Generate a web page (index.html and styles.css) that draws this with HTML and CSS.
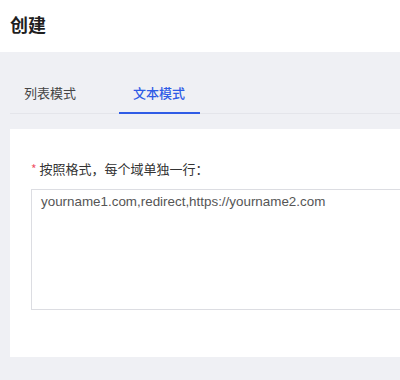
FILE: index.html
```html
<!DOCTYPE html>
<html lang="zh">
<head>
<meta charset="utf-8">
<link rel="stylesheet" href="styles.css">
</head>
<body>
<header class="header"><h1 class="title">创建</h1></header>
<main class="main">
  <nav class="tabs">
    <div class="tab">列表模式</div>
    <div class="tab tab-active">文本模式</div>
  </nav>
  <section class="card">
    <label class="label"><span class="req">*</span>按照格式，每个域单独一行：</label>
    <div class="textarea">yourname1.com,redirect,https://yourname2.com</div>
  </section>
</main>
</body>
</html>
```
FILE: styles.css
```css
html, body {
  margin: 0;
  padding: 0;
  width: 400px;
  height: 380px;
  overflow: hidden;
  background: #eff0f4;
  font-family: "Liberation Sans", "Noto Sans CJK SC", sans-serif;
}
.header {
  background: #fff;
  height: 52px;
  display: flex;
  align-items: center;
  padding-left: 10px;
}
.title {
  margin: 0;
  font-size: 18px;
  font-weight: 600;
  color: #1f1f1f;
  font-family: "Noto Sans CJK SC", sans-serif;
  position: relative;
  top: -2px;
}
.main {
  padding: 23px 0 0 10px;
}
.tabs {
  display: flex;
  border-bottom: 1px solid #e4e5ea;
  height: 38px;
  align-items: stretch;
}
.tab {
  font-family: "Noto Sans CJK SC", sans-serif;
  font-size: 13px;
  color: #444;
  padding: 8px 15px 0 14px;
  margin-right: 28px;
  width: 52px;
  box-sizing: content-box;
}
.tab-active {
  color: #2f5ce6;
  font-weight: 500;
  border-bottom: 2px solid #2f5ce6;
  margin-bottom: -1px;
}
.card {
  background: #fff;
  margin-top: 15px;
  height: 228px;
  padding: 30px 0 0 21px;
  box-sizing: border-box;
  overflow: hidden;
}
.label {
  display: flex;
  align-items: center;
  font-family: "Noto Sans CJK SC", sans-serif;
  font-size: 13px;
  color: #333;
}
.req {
  color: #f0566a;
  margin-right: 3px;
  font-size: 12px;
}
.textarea {
  margin-top: 11px;
  width: 400px;
  height: 121px;
  border: 1px solid #dcdde2;
  padding: 3px 9px;
  box-sizing: border-box;
  font-size: 13.4px;
  color: #555;
  line-height: 18px;
}
```
